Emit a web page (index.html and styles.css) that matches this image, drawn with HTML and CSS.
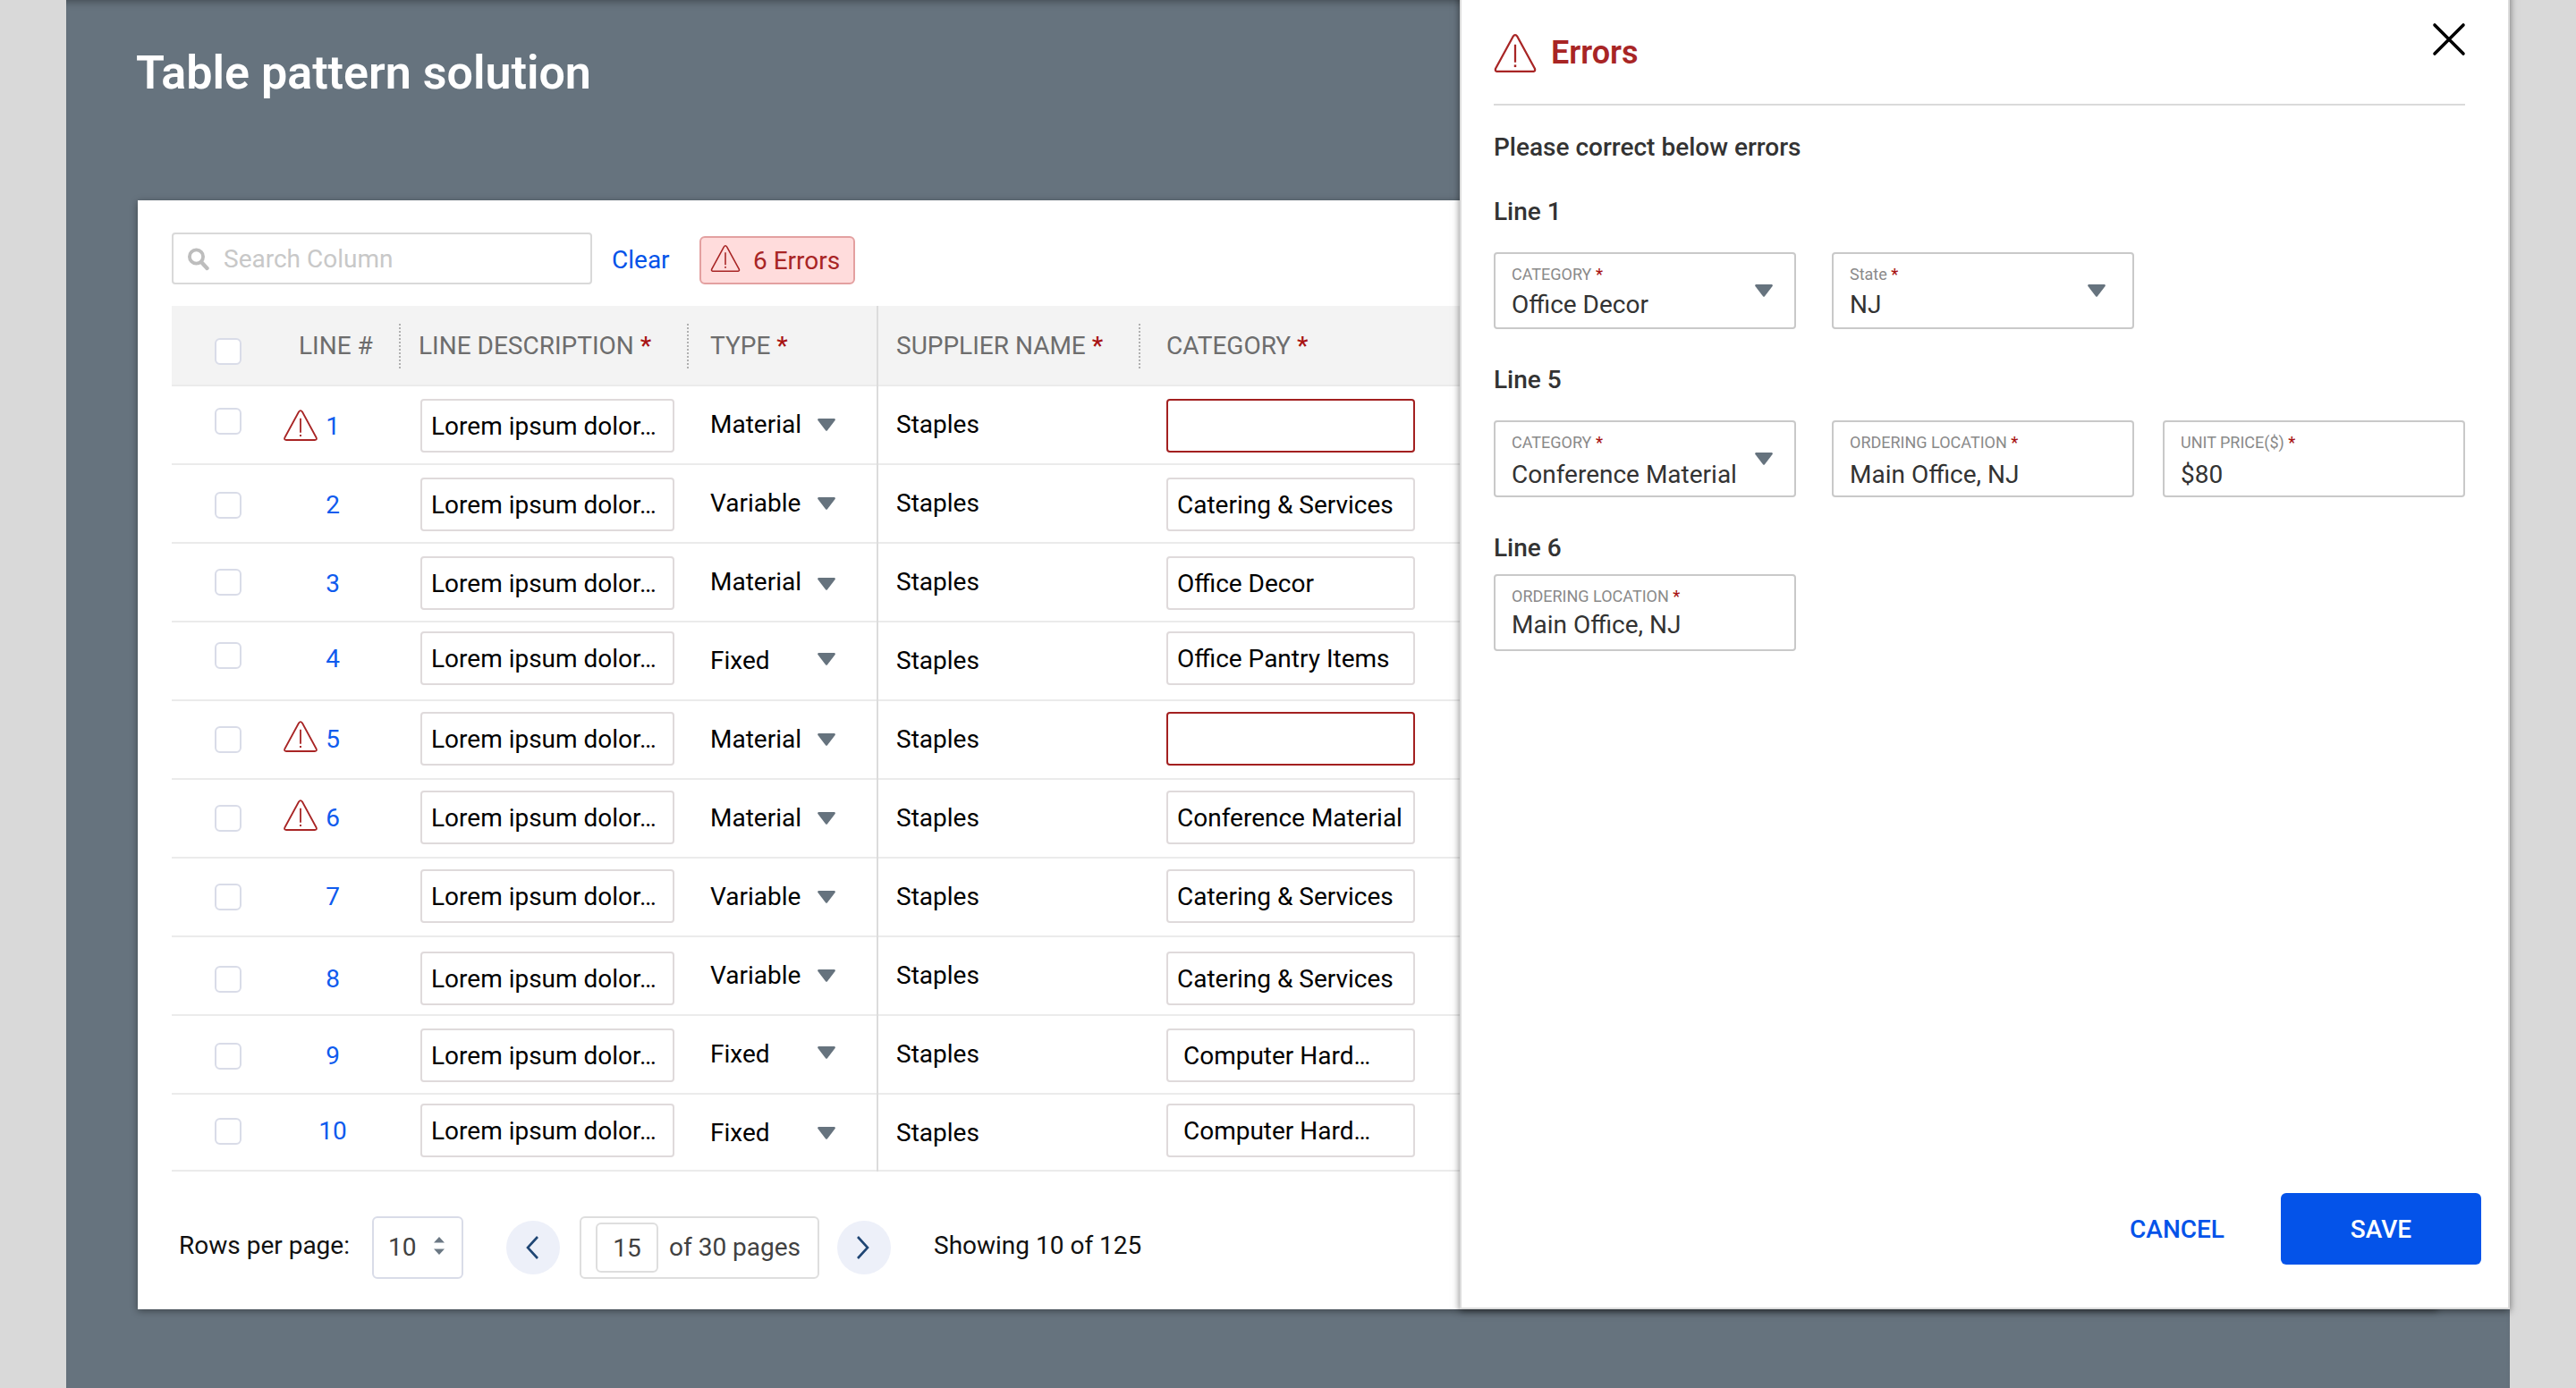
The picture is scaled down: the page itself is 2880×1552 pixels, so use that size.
FILE: index.html
```html
<!DOCTYPE html>
<html lang="en">
<head>
    <meta charset="UTF-8">
    <meta name="viewport" content="width=device-width, initial-scale=1.0">
    <title>Table pattern solution</title>
    <link rel="stylesheet" href="styles.css">
</head>
<body>
    <!-- Shared icons -->
    <svg class="sprite" width="0" height="0">
        <symbol id="warning" viewBox="0 0 46 42">
            <path d="M20.6 2.9 Q23 -0.6 25.4 2.9 L44.3 37.6 Q45.6 40.9 42.2 41 L3.8 41 Q0.4 40.9 1.7 37.6 Z" fill="none" stroke="currentColor" stroke-width="2.2" stroke-linejoin="round"/>
            <path d="M23 11.5 V31" stroke="currentColor" stroke-width="2.2"/>
            <path d="M23 33.6 V36.2" stroke="currentColor" stroke-width="2.4"/>
        </symbol>
        <symbol id="caret" viewBox="0 0 20 14">
            <path d="M1.2 0 H18.8 Q20.4 0.4 19.6 2 L11 13.3 Q10 14.4 9 13.3 L0.4 2 Q-0.4 0.4 1.2 0 Z" fill="currentColor"/>
        </symbol>
    </svg>

    <div class="page">
        <h1>Table pattern solution</h1>

        <main class="card">
            <div class="toolbar">
                <div class="search">
                    <svg class="search-icon" width="26" height="26" viewBox="0 0 26 26">
                        <circle cx="9.5" cy="10" r="7.6" fill="none" stroke="currentColor" stroke-width="3.8"/>
                        <path d="M15.5 16.5 L21.5 23" stroke="currentColor" stroke-width="4.4" stroke-linecap="round"/>
                    </svg>
                    <span>Search Column</span>
                </div>
                <a class="clear">Clear</a>
                <div class="error-chip">
                    <svg class="chip-icon"><use href="#warning"/></svg>
                    <span>6 Errors</span>
                </div>
            </div>

            <div class="table">
                <div class="row head">
                    <div class="cell"><span class="checkbox"></span></div>
                    <div class="cell divided">LINE #</div>
                    <div class="cell divided">LINE DESCRIPTION <b>*</b></div>
                    <div class="cell frozen">TYPE <b>*</b></div>
                    <div class="cell divided">SUPPLIER NAME <b>*</b></div>
                    <div class="cell">CATEGORY <b>*</b></div>
                </div>
                <div class="row">
                    <div class="cell"><span class="checkbox"></span></div>
                    <div class="cell line"><span class="flag"><svg><use href="#warning"/></svg></span><a>1</a></div>
                    <div class="cell desc"><span class="input">Lorem ipsum dolor…</span></div>
                    <div class="cell type"><span>Material</span><svg class="caret"><use href="#caret"/></svg></div>
                    <div class="cell supplier">Staples</div>
                    <div class="cell category"><span class="input invalid"></span></div>
                </div>
                <div class="row">
                    <div class="cell"><span class="checkbox"></span></div>
                    <div class="cell line"><span class="flag"></span><a>2</a></div>
                    <div class="cell desc"><span class="input">Lorem ipsum dolor…</span></div>
                    <div class="cell type"><span>Variable</span><svg class="caret"><use href="#caret"/></svg></div>
                    <div class="cell supplier">Staples</div>
                    <div class="cell category"><span class="input">Catering &amp; Services</span></div>
                </div>
                <div class="row">
                    <div class="cell"><span class="checkbox"></span></div>
                    <div class="cell line"><span class="flag"></span><a>3</a></div>
                    <div class="cell desc"><span class="input">Lorem ipsum dolor…</span></div>
                    <div class="cell type"><span>Material</span><svg class="caret"><use href="#caret"/></svg></div>
                    <div class="cell supplier">Staples</div>
                    <div class="cell category"><span class="input">Office Decor</span></div>
                </div>
                <div class="row">
                    <div class="cell"><span class="checkbox"></span></div>
                    <div class="cell line"><span class="flag"></span><a>4</a></div>
                    <div class="cell desc"><span class="input">Lorem ipsum dolor…</span></div>
                    <div class="cell type"><span>Fixed</span><svg class="caret"><use href="#caret"/></svg></div>
                    <div class="cell supplier">Staples</div>
                    <div class="cell category"><span class="input">Office Pantry Items</span></div>
                </div>
                <div class="row">
                    <div class="cell"><span class="checkbox"></span></div>
                    <div class="cell line"><span class="flag"><svg><use href="#warning"/></svg></span><a>5</a></div>
                    <div class="cell desc"><span class="input">Lorem ipsum dolor…</span></div>
                    <div class="cell type"><span>Material</span><svg class="caret"><use href="#caret"/></svg></div>
                    <div class="cell supplier">Staples</div>
                    <div class="cell category"><span class="input invalid"></span></div>
                </div>
                <div class="row">
                    <div class="cell"><span class="checkbox"></span></div>
                    <div class="cell line"><span class="flag"><svg><use href="#warning"/></svg></span><a>6</a></div>
                    <div class="cell desc"><span class="input">Lorem ipsum dolor…</span></div>
                    <div class="cell type"><span>Material</span><svg class="caret"><use href="#caret"/></svg></div>
                    <div class="cell supplier">Staples</div>
                    <div class="cell category"><span class="input">Conference Material</span></div>
                </div>
                <div class="row">
                    <div class="cell"><span class="checkbox"></span></div>
                    <div class="cell line"><span class="flag"></span><a>7</a></div>
                    <div class="cell desc"><span class="input">Lorem ipsum dolor…</span></div>
                    <div class="cell type"><span>Variable</span><svg class="caret"><use href="#caret"/></svg></div>
                    <div class="cell supplier">Staples</div>
                    <div class="cell category"><span class="input">Catering &amp; Services</span></div>
                </div>
                <div class="row">
                    <div class="cell"><span class="checkbox"></span></div>
                    <div class="cell line"><span class="flag"></span><a>8</a></div>
                    <div class="cell desc"><span class="input">Lorem ipsum dolor…</span></div>
                    <div class="cell type"><span>Variable</span><svg class="caret"><use href="#caret"/></svg></div>
                    <div class="cell supplier">Staples</div>
                    <div class="cell category"><span class="input">Catering &amp; Services</span></div>
                </div>
                <div class="row">
                    <div class="cell"><span class="checkbox"></span></div>
                    <div class="cell line"><span class="flag"></span><a>9</a></div>
                    <div class="cell desc"><span class="input">Lorem ipsum dolor…</span></div>
                    <div class="cell type"><span>Fixed</span><svg class="caret"><use href="#caret"/></svg></div>
                    <div class="cell supplier">Staples</div>
                    <div class="cell category"><span class="input">&nbsp;Computer Hard…</span></div>
                </div>
                <div class="row">
                    <div class="cell"><span class="checkbox"></span></div>
                    <div class="cell line"><span class="flag"></span><a>10</a></div>
                    <div class="cell desc"><span class="input">Lorem ipsum dolor…</span></div>
                    <div class="cell type"><span>Fixed</span><svg class="caret"><use href="#caret"/></svg></div>
                    <div class="cell supplier">Staples</div>
                    <div class="cell category"><span class="input">&nbsp;Computer Hard…</span></div>
                </div>
            </div>

            <div class="pagination">
                <span class="rows-label">Rows per page:</span>
                <div class="rows-select">
                    <span>10</span>
                    <svg width="14" height="20" viewBox="0 0 14 20">
                        <path d="M7 0 L13 6.5 H1 Z M7 20 L13 13.5 H1 Z" fill="currentColor"/>
                    </svg>
                </div>
                <button class="page-button">
                    <svg width="16" height="28" viewBox="0 0 16 28"><path d="M14 2 L3 14 L14 26" fill="none" stroke="currentColor" stroke-width="2.6"/></svg>
                </button>
                <div class="page-box">
                    <span class="page-number">15</span>
                    <span>of 30 pages</span>
                </div>
                <button class="page-button">
                    <svg width="16" height="28" viewBox="0 0 16 28"><path d="M2 2 L13 14 L2 26" fill="none" stroke="currentColor" stroke-width="2.6"/></svg>
                </button>
                <span class="showing">Showing 10 of 125</span>
            </div>
        </main>
    </div>

    <!-- Errors drawer, lies over the table -->
    <aside class="drawer">
        <header class="drawer-head">
            <svg class="drawer-icon"><use href="#warning"/></svg>
            <h2>Errors</h2>
            <svg class="close" width="40" height="40" viewBox="0 0 40 40">
                <path d="M4 4 L36 36 M36 4 L4 36" stroke="currentColor" stroke-width="3.6" stroke-linecap="round"/>
            </svg>
        </header>

        <p class="hint">Please correct below errors</p>

        <section class="group line-one">
            <h3>Line 1</h3>
            <div class="fields">
                <div class="field">
                    <div><label>CATEGORY <b>*</b></label><span class="value">Office Decor</span></div>
                    <svg class="caret"><use href="#caret"/></svg>
                </div>
                <div class="field state">
                    <div><label>State <b>*</b></label><span class="value">NJ</span></div>
                    <svg class="caret"><use href="#caret"/></svg>
                </div>
            </div>
        </section>

        <section class="group line-five">
            <h3>Line 5</h3>
            <div class="fields">
                <div class="field">
                    <div><label>CATEGORY <b>*</b></label><span class="value">Conference Material</span></div>
                    <svg class="caret"><use href="#caret"/></svg>
                </div>
                <div class="field">
                    <div><label>ORDERING LOCATION <b>*</b></label><span class="value">Main Office, NJ</span></div>
                </div>
                <div class="field">
                    <div><label>UNIT PRICE($) <b>*</b></label><span class="value">$80</span></div>
                </div>
            </div>
        </section>

        <section class="group line-six">
            <h3>Line 6</h3>
            <div class="fields">
                <div class="field">
                    <div><label>ORDERING LOCATION <b>*</b></label><span class="value">Main Office, NJ</span></div>
                </div>
            </div>
        </section>

        <footer class="actions">
            <button class="cancel">CANCEL</button>
            <button class="save">SAVE</button>
        </footer>
    </aside>
</body>
</html>
```
FILE: styles.css
```css
* {
    margin: 0;
    padding: 0;
    box-sizing: border-box;
}

body {
    width: 2880px;
    height: 1552px;
    background: #d9d9d9;
    font-family: Roboto, sans-serif;
    font-size: 28px;
    line-height: 32px;
    color: #000;
    position: relative;
    overflow: hidden;
}

b {
    color: #a81414;
    font-weight: 500;
}

button {
    border: none;
    background: none;
    font: inherit;
}

svg {
    display: block;
    flex: none;
}

.sprite {
    position: absolute;
}

.page {
    width: 2732px;
    height: 1552px;
    margin-left: 74px;
    padding: 52px 81px 0 80px;
    background: #66737e;
    box-shadow: inset 0 8px 8px -6px rgba(0, 0, 0, 0.35);
}

h1 {
    font-size: 52px;
    line-height: 60px;
    font-weight: 600;
    color: #fff;
    margin-left: -2px;
}

.card {
    height: 1240px;
    margin-top: 112px;
    padding: 36px 0 0 38px;
    background: #fff;
    box-shadow: 0 2px 8px rgba(0, 0, 0, 0.4);
}

/* Toolbar */
.toolbar {
    display: flex;
    height: 58px;
    margin-bottom: 24px;
}

.search {
    width: 470px;
    display: flex;
    align-items: center;
    padding: 2px 0 0 16px;
    gap: 14px;
    border: 2px solid #d9d9d9;
    border-radius: 4px;
    color: #c8c8c8;
}

.search-icon {
    color: #bdbdbd;
}

.clear {
    margin-left: 22px;
    width: 98px;
    line-height: 62px;
    color: #0453e9;
}

.error-chip {
    width: 174px;
    height: 54px;
    margin-top: 4px;
    padding: 2px 0 0 10px;
    display: flex;
    align-items: center;
    gap: 14px;
    background: #ffdcdc;
    border: 2px solid #e3a0a0;
    border-radius: 6px;
    color: #a82525;
}

.chip-icon {
    width: 34px;
    height: 30px;
    margin-top: -6px;
}

/* Table */
.row {
    display: grid;
    grid-template-columns: 125px 131px 322px 212px 293px 1fr;
    height: 88px;
    border-bottom: 2px solid #ebebeb;
    --check: 28px;
    --box: 12px;
    --arrow: 36px;
}

.row:nth-child(2) { --check: 24px; --box: 14px; }
.row:nth-child(3) { --check: 30px; --box: 14px; }
.row:nth-child(4) { --box: 14px; --arrow: 38px; }
.row:nth-child(5) { --check: 22px; --box: 10px; --arrow: 34px; }
.row:nth-child(9) { --check: 32px; --box: 16px; }
.row:nth-child(10) { --check: 30px; --box: 14px; --arrow: 34px; }
.row:nth-child(11) { --check: 26px; --box: 10px; height: 86px; }

.row.head {
    height: 90px;
    background: #f3f3f3;
    color: #6d6d6d;
    --check: 36px;
}

.cell {
    display: flex;
    align-items: flex-start;
}

.checkbox {
    width: 30px;
    height: 30px;
    margin: var(--check) 0 0 48px;
    background: #fff;
    border: 2px solid #d9dce8;
    border-radius: 6px;
}

.head .cell:not(:first-child) {
    padding: 29px 0 0 20px;
    white-space: pre;
}

.head .cell:nth-child(2) {
    padding-left: 17px;
}

.head .cell:nth-child(4) {
    padding-left: 24px;
}

.head .cell:nth-child(6) {
    padding-left: 29px;
}

.head .divided::after {
    content: '';
    width: 2px;
    height: 50px;
    margin: -9px 0 0 auto;
    background: repeating-linear-gradient(#b0b0b0 0 2px, transparent 2px 4px);
}

.frozen,
.type {
    border-right: 2px solid #dcdcdc;
    margin-bottom: -2px;
}

.line {
    padding-top: calc(var(--box) + 15px);
}

.line a {
    width: 34px;
    text-align: center;
    color: #0f5bee;
}

.flag {
    width: 38px;
    color: #a82525;
}

.flag svg {
    width: 38px;
    height: 35px;
    margin-top: -5px;
}

.row:nth-child(2) .flag svg {
    margin-top: -3px;
}

.input {
    width: 284px;
    height: 60px;
    margin-top: var(--box);
    padding: 13px 0 0 10px;
    border: 2px solid #dfdadb;
    border-radius: 4px;
    white-space: nowrap;
}

.desc {
    padding-left: 22px;
}

.category {
    padding-left: 29px;
}

.category .input {
    width: 278px;
}

.input.invalid {
    border-color: #a32020;
}

.type {
    padding-left: 24px;
}

.type span {
    width: 120px;
    padding-top: 27px;
}

.caret {
    width: 20px;
    height: 14px;
    color: #66737e;
}

.type .caret {
    margin-top: var(--arrow);
}

.supplier {
    padding: 27px 0 0 20px;
}

/* Pagination */
.pagination {
    display: flex;
    align-items: center;
    height: 70px;
    margin-top: 50px;
    padding-left: 8px;
    color: #414141;
}

.rows-label,
.showing {
    margin-top: -4px;
    color: #111;
}

.rows-label {
    width: 216px;
}

.rows-select {
    width: 102px;
    height: 70px;
    display: flex;
    align-items: center;
    padding-left: 16px;
    gap: 19px;
    border: 2px solid #d9dce8;
    border-radius: 6px;
}

.rows-select svg {
    color: #6b7884;
    margin-top: -4px;
}

.page-button {
    width: 60px;
    height: 60px;
    margin-left: 48px;
    padding-right: 2px;
    display: flex;
    align-items: center;
    justify-content: center;
    border-radius: 50%;
    background: #edf0f9;
    color: #1f4674;
}

.page-box {
    width: 268px;
    height: 70px;
    margin-left: 22px;
    padding-left: 16px;
    display: flex;
    align-items: center;
    gap: 12px;
    border: 2px solid #dedede;
    border-radius: 6px;
}

.page-number {
    width: 70px;
    height: 56px;
    line-height: 54px;
    text-align: center;
    border: 2px solid #dedede;
    border-radius: 6px;
}

.page-box + .page-button {
    margin-left: 20px;
}

.showing {
    margin-left: 48px;
}

/* Errors drawer */
.drawer {
    position: absolute;
    top: -10px;
    left: 1632px;
    width: 1174px;
    height: 1474px;
    padding: 8px 48px 0 36px;
    display: flex;
    flex-direction: column;
    background: #fff;
    border: 2px solid #dcdcdc;
    box-shadow: 0 2px 8px rgba(0, 0, 0, 0.5);
    color: #333;
}

.drawer-head {
    height: 118px;
    display: flex;
    align-items: flex-start;
    border-bottom: 2px solid #dadada;
}

.drawer-icon {
    width: 48px;
    height: 43px;
    margin-top: 38px;
    color: #a82525;
}

h2 {
    margin: 38px 0 0 16px;
    font-size: 36px;
    line-height: 42px;
    font-weight: 600;
    color: #a82525;
}

.close {
    margin: 24px -2px 0 auto;
    color: #000;
}

.hint {
    margin-top: 31px;
    font-weight: 500;
}

h3 {
    font-size: 28px;
    line-height: 32px;
    font-weight: 500;
}

.group {
    margin-top: 40px;
}

.fields {
    display: flex;
    margin-top: 29px;
}

.group + .group {
    margin-top: 41px;
}

.field {
    width: 338px;
    height: 86px;
    padding: 12px 24px 0 18px;
    display: flex;
    justify-content: space-between;
    border: 2px solid #c9c9c9;
    border-radius: 4px;
    white-space: nowrap;
}

.field + .field {
    margin-left: 40px;
}

.field:nth-child(3) {
    margin-left: 32px;
}

.field.state {
    padding-right: 30px;
}

.field .caret {
    margin-top: 22px;
}

label,
.value {
    display: block;
}

label {
    font-size: 18px;
    line-height: 22px;
    color: #8a8a8a;
}

.value {
    margin-top: 7px;
}

.line-five .value {
    margin-top: 9px;
}

.line-six .value {
    margin-top: 5px;
}

.line-six .fields {
    margin-top: 13px;
}

.actions {
    display: flex;
    justify-content: flex-end;
    align-items: center;
    margin: auto -18px 48px 0;
    font-weight: 500;
}

.cancel {
    margin-right: 63px;
    padding-top: 1px;
    color: #0453e9;
}

.save {
    width: 224px;
    height: 80px;
    padding-top: 1px;
    border-radius: 6px;
    background: #0453e9;
    color: #fff;
}
```
